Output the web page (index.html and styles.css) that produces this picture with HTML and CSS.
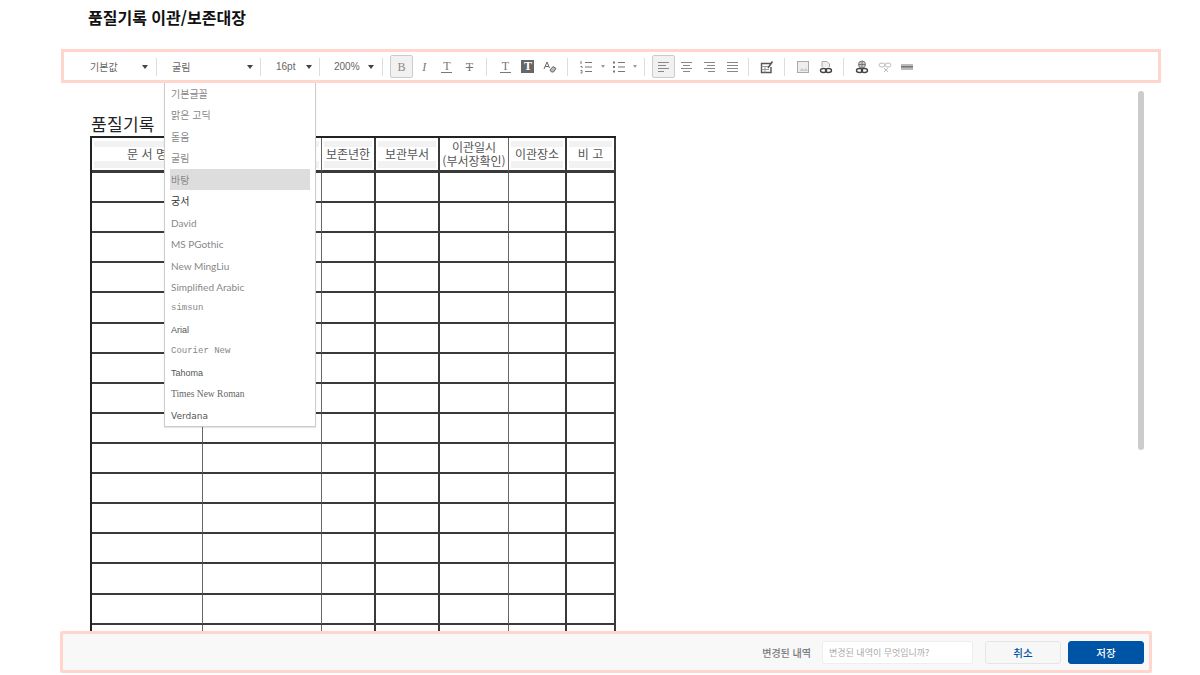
FILE: index.html
```html
<!DOCTYPE html>
<html lang="ko">
<head>
    <meta charset="UTF-8">
    <title>품질기록 이관/보존대장</title>
    <link rel="stylesheet" href="styles.css">
</head>
<body>
    <h1 class="page-title">품질기록 이관/보존대장</h1>

    <div class="toolbar">
        <div class="tb-select sel-style"><span>기본값</span><i class="caret"></i></div>
        <b class="sep"></b>
        <div class="tb-select sel-font"><span>굴림</span><i class="caret"></i></div>
        <b class="sep"></b>
        <div class="tb-select sel-size"><span>16pt</span><i class="caret"></i></div>
        <b class="sep"></b>
        <div class="tb-select sel-zoom"><span>200%</span><i class="caret"></i></div>
        <b class="sep"></b>

        <div class="tb-group g-text">
            <span class="tb-btn active"><span class="glyph bold">B</span></span>
            <span class="tb-btn"><span class="glyph ital">I</span></span>
            <span class="tb-btn"><span class="glyph under">T</span></span>
            <span class="tb-btn"><span class="glyph strike">T</span></span>
        </div>
        <b class="sep"></b>

        <div class="tb-group g-color">
            <span class="tb-btn"><span class="glyph under">T</span></span>
            <span class="tb-btn"><span class="glyph filled">T</span></span>
            <span class="tb-btn">
                <svg width="14" height="14" viewBox="0 0 14 14" fill="none" stroke="#666" stroke-width="1">
                    <path d="M1 9 L4 2 L6.5 8 M2.2 6.5 H5.5"/>
                    <path d="M7 10 L10 6.5 L13 8.5 L10.5 12 H8.5 Z" fill="#bbb"/>
                </svg>
            </span>
        </div>
        <b class="sep"></b>

        <div class="tb-group g-list">
            <span class="tb-btn">
                <svg width="14" height="14" viewBox="0 0 14 14" fill="none" stroke="#777">
                    <path d="M2 1 V4 M1.5 6.5 H3 V8 M1.5 10.5 H3 V13 H1.5"/>
                    <path d="M6 2.5 H13 M6 7 H13 M6 11.5 H13"/>
                </svg>
            </span>
            <i class="mini-caret"></i>
            <span class="tb-btn">
                <svg width="14" height="14" viewBox="0 0 14 14" fill="none" stroke="#777">
                    <path d="M1 2.5 H3 M1 7 H3 M1 11.5 H3" stroke-width="2"/>
                    <path d="M6 2.5 H13 M6 7 H13 M6 11.5 H13"/>
                </svg>
            </span>
            <i class="mini-caret"></i>
        </div>
        <b class="sep"></b>

        <div class="tb-group g-align">
            <span class="tb-btn active">
                <svg width="13" height="11" viewBox="0 0 13 11" stroke="#888"><path d="M1 1.5 H12 M1 4.5 H9 M1 7.5 H12 M1 10.5 H7"/></svg>
            </span>
            <span class="tb-btn">
                <svg width="13" height="11" viewBox="0 0 13 11" stroke="#888"><path d="M1 1.5 H12 M3 4.5 H10 M1 7.5 H12 M3 10.5 H10"/></svg>
            </span>
            <span class="tb-btn">
                <svg width="13" height="11" viewBox="0 0 13 11" stroke="#888"><path d="M1 1.5 H12 M4 4.5 H12 M1 7.5 H12 M5 10.5 H12"/></svg>
            </span>
            <span class="tb-btn">
                <svg width="13" height="11" viewBox="0 0 13 11" stroke="#888"><path d="M1 1.5 H12 M1 4.5 H12 M1 7.5 H12 M1 10.5 H12"/></svg>
            </span>
        </div>
        <b class="sep"></b>

        <div class="tb-group g-one">
            <span class="tb-btn">
                <svg width="14" height="14" viewBox="0 0 14 14" fill="none" stroke="#555">
                    <path d="M11 3.5 H1.5 V12.5 H11 V7" stroke-width="1.4"/>
                    <path d="M1.5 6.5 H9 M5 6.5 V12.5 M1.5 9.5 H9" stroke="#999"/>
                    <path d="M8 8 L12.5 1.5" stroke-width="1.5"/>
                </svg>
            </span>
        </div>
        <b class="sep"></b>

        <div class="tb-group g-two">
            <span class="tb-btn">
                <svg width="14" height="14" viewBox="0 0 14 14" fill="#eee" stroke="#aaa">
                    <rect x="1.5" y="1.5" width="11" height="11"/>
                    <path d="M3 11 L6 8 L8 10 L10 8 L12 11 Z" fill="#ccc" stroke="none"/>
                </svg>
            </span>
            <span class="tb-btn">
                <svg width="14" height="14" viewBox="0 0 14 14" fill="none" stroke="#444">
                    <path d="M3 7 V1.5 H8 L10.5 4 V7" stroke="#aaa" fill="#eee"/>
                    <ellipse cx="4.5" cy="10.5" rx="3" ry="2" stroke-width="1.4"/>
                    <ellipse cx="9.5" cy="10.5" rx="3" ry="2" stroke-width="1.4"/>
                </svg>
            </span>
        </div>
        <b class="sep"></b>

        <div class="tb-group g-three">
            <span class="tb-btn">
                <svg width="14" height="14" viewBox="0 0 14 14" fill="none" stroke="#444">
                    <circle cx="7" cy="4.5" r="3.5" fill="#ccc" stroke="#777"/>
                    <path d="M3.5 4.5 H10.5 M7 1 V8" stroke="#777"/>
                    <ellipse cx="4.5" cy="10.5" rx="3" ry="2" stroke-width="1.4"/>
                    <ellipse cx="9.5" cy="10.5" rx="3" ry="2" stroke-width="1.4"/>
                </svg>
            </span>
            <span class="tb-btn">
                <svg width="14" height="12" viewBox="0 0 14 12" fill="none" stroke="#bbb">
                    <ellipse cx="4" cy="4" rx="3" ry="2"/>
                    <ellipse cx="10" cy="4" rx="3" ry="2"/>
                    <path d="M6 7 L10 11 M10 7 L6 11"/>
                </svg>
            </span>
            <span class="tb-btn">
                <svg width="12" height="6" viewBox="0 0 12 6">
                    <rect width="12" height="6" fill="#bbb"/>
                    <rect y="2" width="12" height="1.5" fill="#777"/>
                </svg>
            </span>
        </div>
    </div>

    <div class="editor">
        <div class="doc-title">품질기록</div>
        <table class="doc-table">
            <tr>
                <th><p>문 서 명</p></th>
                <th><p>&nbsp;</p></th>
                <th><p>보존년한</p></th>
                <th><p>보관부서</p></th>
                <th><p class="two-line">이관일시<br>(부서장확인)</p></th>
                <th><p>이관장소</p></th>
                <th><p>비 고</p></th>
            </tr>
            <tr><td></td><td></td><td></td><td></td><td></td><td></td><td></td></tr>
            <tr><td></td><td></td><td></td><td></td><td></td><td></td><td></td></tr>
            <tr><td></td><td></td><td></td><td></td><td></td><td></td><td></td></tr>
            <tr><td></td><td></td><td></td><td></td><td></td><td></td><td></td></tr>
            <tr class="tall"><td></td><td></td><td></td><td></td><td></td><td></td><td></td></tr>
            <tr><td></td><td></td><td></td><td></td><td></td><td></td><td></td></tr>
            <tr><td></td><td></td><td></td><td></td><td></td><td></td><td></td></tr>
            <tr><td></td><td></td><td></td><td></td><td></td><td></td><td></td></tr>
            <tr><td></td><td></td><td></td><td></td><td></td><td></td><td></td></tr>
            <tr><td></td><td></td><td></td><td></td><td></td><td></td><td></td></tr>
            <tr><td></td><td></td><td></td><td></td><td></td><td></td><td></td></tr>
            <tr><td></td><td></td><td></td><td></td><td></td><td></td><td></td></tr>
            <tr><td></td><td></td><td></td><td></td><td></td><td></td><td></td></tr>
            <tr class="tall"><td></td><td></td><td></td><td></td><td></td><td></td><td></td></tr>
            <tr><td></td><td></td><td></td><td></td><td></td><td></td><td></td></tr>
            <tr><td></td><td></td><td></td><td></td><td></td><td></td><td></td></tr>
        </table>

        <ul class="font-menu">
            <li>기본글꼴</li>
            <li>맑은 고딕</li>
            <li>돋움</li>
            <li>굴림</li>
            <li class="selected">바탕</li>
            <li class="f-dark">궁서</li>
            <li class="f-lato">David</li>
            <li class="f-lato">MS PGothic</li>
            <li class="f-lato">New MingLiu</li>
            <li class="f-lato">Simplified Arabic</li>
            <li class="f-mono">simsun</li>
            <li class="f-arial">Arial</li>
            <li class="f-mono">Courier New</li>
            <li class="f-arial">Tahoma</li>
            <li class="f-times">Times New Roman</li>
            <li class="f-verdana">Verdana</li>
        </ul>

        <div class="scroll-thumb"></div>
    </div>

    <div class="footer">
        <label class="change-label" for="changeNote">변경된 내역</label>
        <input class="change-input" id="changeNote" type="text" placeholder="변경된 내역이 무엇입니까?">
        <button class="btn btn-cancel" type="button">취소</button>
        <button class="btn btn-save" type="button">저장</button>
    </div>
</body>
</html>
```

FILE: styles.css
```css
* {
    box-sizing: border-box;
}
html, body {
    height: 675px;
}
body {
    margin: 0;
    overflow: hidden;
    display: flex;
    flex-direction: column;
    background-color: #fff;
    color: #333;
    font-family: "Noto Sans CJK KR", "Liberation Sans", sans-serif;
}
.page-title {
    flex: none;
    height: 36px;
    margin: 0 0 13px 88px;
    color: #111;
    font-size: 16px;
    line-height: 34px;
    font-weight: 700;
}

/* toolbar */
.toolbar {
    flex: none;
    display: flex;
    align-items: center;
    width: 1100px;
    height: 34px;
    margin-left: 61px;
    padding-top: 1px;
    border: 3px solid #ffd5cc;
    font-size: 10px;
    color: #666;
}
.tb-select {
    display: flex;
    align-items: center;
    justify-content: space-between;
    height: 20px;
    padding: 0 7px 0 14px;
}
.sel-style {
    width: 92px;
    padding-left: 26px;
    padding-right: 8px;
}
.sel-font {
    width: 103px;
    padding-left: 15px;
}
.sel-size {
    width: 58px;
    padding-left: 15px;
}
.sel-zoom {
    width: 62px;
    padding-right: 8px;
}
.sel-size,
.sel-zoom {
    font-family: "Liberation Sans", sans-serif;
}
.caret {
    width: 0;
    height: 0;
    border-left: 3.5px solid transparent;
    border-right: 3.5px solid transparent;
    border-top: 4px solid #444;
}
.mini-caret {
    flex: none;
    width: 0;
    height: 0;
    margin: 0 3px;
    border-left: 2px solid transparent;
    border-right: 2px solid transparent;
    border-top: 3px solid #999;
}
.sep {
    flex: none;
    width: 1px;
    height: 18px;
    background-color: #ddd;
}
.tb-group {
    display: flex;
    align-items: center;
    padding-left: 7px;
}
.g-text { width: 103px; }
.g-color { width: 80px; }
.g-list { width: 76px; }
.g-align { width: 103px; }
.g-one { width: 35px; }
.g-two { width: 58px; }
.g-three { width: 80px; }
.tb-btn {
    flex: none;
    display: flex;
    align-items: center;
    justify-content: center;
    width: 22.6px;
    height: 23px;
}
.tb-btn.active {
    width: 23px;
    background-color: #f1f1f1;
    border: 1px solid #ccc;
    border-radius: 2px;
}
.g-align .tb-btn {
    width: 23px;
}
.glyph {
    display: block;
    width: 11px;
    font-family: "Liberation Serif", serif;
    font-size: 12px;
    line-height: 12px;
    text-align: center;
    color: #777;
}
.bold {
    color: #888;
}
.ital {
    font-style: italic;
}
.under {
    border-bottom: 1px solid #777;
}
.strike {
    text-decoration: line-through;
}
.filled {
    width: 13px;
    height: 13px;
    background-color: #666;
    color: #fff;
    font-weight: 700;
    line-height: 13px;
}

/* document */
.editor {
    position: relative;
    flex: 1;
    min-height: 0;
    overflow: hidden;
    padding: 29px 0 0 90px;
}
.doc-title {
    height: 24px;
    padding-left: 1px;
    color: #222;
    font-size: 17px;
    line-height: 24px;
    letter-spacing: 0.3px;
}
.doc-table {
    width: 526px;
    table-layout: fixed;
    border-collapse: separate;
    border-spacing: 0;
    border-top: 2px solid #222;
    border-left: 2px solid #222;
}
.doc-table th,
.doc-table td {
    padding: 0;
    border-right: 2px solid #3a3a3a;
    border-bottom: 2px solid #3a3a3a;
}
.doc-table th:nth-child(1), .doc-table td:nth-child(1) { width: 111px; border-right-width: 1px; border-right-color: #666; }
.doc-table th:nth-child(2), .doc-table td:nth-child(2) { width: 119px; border-right-width: 1px; border-right-color: #666; }
.doc-table th:nth-child(3), .doc-table td:nth-child(3) { width: 54px; }
.doc-table th:nth-child(4), .doc-table td:nth-child(4) { width: 64px; }
.doc-table th:nth-child(5), .doc-table td:nth-child(5) { width: 69px; border-right-width: 1px; border-right-color: #666; }
.doc-table th:nth-child(6), .doc-table td:nth-child(6) { width: 58px; }
.doc-table th {
    height: 35px;
    border-bottom-width: 3px;
    font-weight: 400;
    font-size: 12px;
    vertical-align: middle;
    background: linear-gradient(#f2f2f2, #f2f2f2) center / calc(100% - 4px) calc(100% - 5px) no-repeat;
}
.doc-table th p {
    margin: 0;
    line-height: 14px;
    background-color: #fff;
    color: #555;
}
.doc-table th p.two-line {
    line-height: 14px;
    padding: 2px 0;
}
.doc-table td {
    height: 30px;
}
.doc-table .tall td {
    height: 31px;
}

/* font dropdown */
.font-menu {
    position: absolute;
    top: 0;
    left: 164px;
    width: 152px;
    height: 344px;
    margin: 0;
    padding: 0 5px;
    list-style: none;
    background-color: #fff;
    border: 1px solid #ccc;
    border-top: none;
    box-shadow: 0 1px 1px rgba(0, 0, 0, 0.1);
    color: #888;
    font-size: 10px;
}
.font-menu li {
    height: 21.45px;
    padding-left: 1px;
    line-height: 22px;
}
.font-menu .selected {
    background-color: #ddd;
}
.f-dark {
    color: #333;
}
.f-lato {
    font-family: Lato, sans-serif;
}
.f-mono {
    font-family: "Liberation Mono", monospace;
    font-size: 9px;
}
.f-arial {
    font-family: "Liberation Sans", sans-serif;
    font-size: 9px;
    color: #555;
}
.f-times {
    font-family: "Liberation Serif", serif;
    font-size: 9.5px;
    color: #666;
}
.f-verdana {
    font-family: "DejaVu Sans", sans-serif;
    font-size: 9px;
    color: #555;
}
.scroll-thumb {
    position: absolute;
    top: 8px;
    left: 1138px;
    width: 6px;
    height: 359px;
    border-radius: 3px;
    background-color: #ccc;
}

/* bottom bar */
.footer {
    flex: none;
    display: flex;
    align-items: center;
    justify-content: flex-end;
    width: 1092px;
    height: 42px;
    margin: 0 0 2px 60px;
    padding-right: 5px;
    background-color: #f8f8f8;
    border: 3px solid #ffd5cc;
    border-radius: 2px;
}
.change-label {
    margin-right: 11px;
    color: #777;
    font-size: 10px;
    font-weight: 500;
}
.change-input {
    width: 151px;
    height: 23px;
    margin-right: 12px;
    padding: 0 6px;
    border: 1px solid #eee;
    border-radius: 2px;
    background-color: #fff;
    font-family: inherit;
    font-size: 9px;
}
.change-input::placeholder {
    color: #aaa;
}
.btn {
    width: 76px;
    height: 23px;
    padding: 0;
    border: 1px solid #e5e5e5;
    border-radius: 3px;
    font-family: inherit;
    font-size: 10.5px;
    font-weight: 500;
}
.btn-cancel {
    margin-right: 7px;
    background-color: #f7f7f7;
    color: #0054a6;
}
.btn-save {
    background-color: #0054a6;
    border-color: #0054a6;
    color: #fff;
}
```
